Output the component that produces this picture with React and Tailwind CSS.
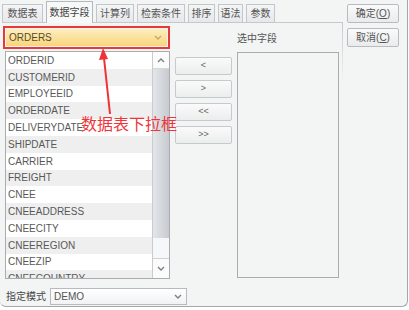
import React from "react";

const fields = [
  "ORDERID",
  "CUSTOMERID",
  "EMPLOYEEID",
  "ORDERDATE",
  "DELIVERYDATE",
  "SHIPDATE",
  "CARRIER",
  "FREIGHT",
  "CNEE",
  "CNEEADDRESS",
  "CNEECITY",
  "CNEEREGION",
  "CNEEZIP",
  "CNEECOUNTRY",
];

const tabs = [
  { label: "数据表", w: "w-[41px]" },
  { label: "数据字段", w: "w-[47px]", active: true },
  { label: "计算列", w: "w-[38px]" },
  { label: "检索条件", w: "w-[48px]" },
  { label: "排序", w: "w-[27px]" },
  { label: "语法", w: "w-[25px]" },
  { label: "参数", w: "w-[29px]" },
];

const Chevron = ({ up, color = "#7a7f86" }) => (
  <svg width="8" height="5" viewBox="0 0 8 5">
    <path
      d={up ? "M1 4 L4 1 L7 4" : "M1 1 L4 4 L7 1"}
      fill="none"
      stroke={color}
      strokeWidth="1.4"
    />
  </svg>
);

const SmallBtn = ({ children }) => (
  <div className="h-[18px] w-[57px] flex items-center justify-center rounded-[2px] border border-[#c6c9cd] bg-gradient-to-b from-[#fafafa] to-[#eceded] text-[9px] text-[#666]">
    {children}
  </div>
);

const App = () => {
  return (
    <div
      className="relative w-[409px] h-[310px] bg-white overflow-hidden"
      style={{ fontFamily: '"Liberation Sans", "Noto Sans CJK SC", sans-serif' }}
    >
      <div className="w-[408px] h-[307px] bg-[#f3f4f4] border-r border-b border-[#a3a7ab] rounded-br-[6px] rounded-bl-[6px] flex">
        {/* left: tabs + panel */}
        <div className="ml-[2px] w-[341px] flex flex-col">
          <div className="flex items-end gap-[3px] h-[22px]">
            {tabs.map((t) =>
              t.active ? (
                <div
                  key={t.label}
                  className={`${t.w} h-[22px] -mb-px relative z-10 flex items-center justify-center border border-b-0 border-[#b5b9be] bg-[#f7f8f8] text-[10px] text-[#444]`}
                >
                  {t.label}
                </div>
              ) : (
                <div
                  key={t.label}
                  className={`${t.w} h-[18px] flex items-center justify-center border border-b-0 border-[#c3c6ca] bg-gradient-to-b from-[#f4f5f6] to-[#e6e8ea] text-[10px] text-[#555]`}
                >
                  {t.label}
                </div>
              )
            )}
          </div>
          <div className="flex-1 border-t border-[#c6c9cc] flex flex-col pl-[1px] relative">
            <div className="absolute right-0 top-0 w-px h-[60px] bg-gradient-to-b from-[#c6c9cc] to-[#f3f4f4]" />
            <div className="flex">
              {/* combo + list */}
              <div className="flex flex-col w-[167px]">
                <div className="mt-[3px] h-[23px] w-[167px] border-2 border-[#e8383a] p-[1px]">
                  <div className="h-full w-full flex items-center justify-between pl-[3px] pr-[5px] bg-gradient-to-b from-[#fdefbd] to-[#f8d57c] text-[10px] text-[#5a4a2a]">
                    <span>ORDERS</span>
                    <Chevron color="#c9a866" />
                  </div>
                </div>
                <div className="mt-[2px] ml-[2px] w-[165px] h-[228px] border border-[#a9adb2] bg-white flex overflow-hidden">
                  <div className="flex-1 flex flex-col overflow-hidden">
                    {fields.map((f, i) => (
                      <div
                        key={f}
                        className={`h-[16.8px] shrink-0 flex items-center pl-[2px] text-[10px] text-[#585858] ${
                          i % 2 === 1 ? "bg-[#efefef]" : "bg-white"
                        }`}
                      >
                        {f}
                      </div>
                    ))}
                  </div>
                  <div className="w-[17px] border-l border-[#c8cbcf] flex flex-col bg-[#f0f1f2]">
                    <div className="h-[17px] flex items-center justify-center bg-[#fbfbfb] border-b border-[#d5d8db]">
                      <Chevron up />
                    </div>
                    <div className="h-[169px] bg-gradient-to-r from-[#e3e6e9] to-[#c7cbd1]" />
                    <div className="h-[21px] bg-[#f6f7f8] border-b border-[#d0d3d6]" />
                    <div className="flex-1 flex items-center justify-center bg-[#fbfbfb]">
                      <Chevron />
                    </div>
                  </div>
                </div>
              </div>
              {/* move buttons */}
              <div className="ml-[5px] pt-[34px] flex flex-col gap-[5px]">
                <SmallBtn>&lt;</SmallBtn>
                <SmallBtn>&gt;</SmallBtn>
                <SmallBtn>&lt;&lt;</SmallBtn>
                <SmallBtn>&gt;&gt;</SmallBtn>
              </div>
              {/* selected fields */}
              <div className="ml-[5px] flex flex-col">
                <div className="h-[29px] pt-[8px] text-[10px] text-[#555]">选中字段</div>
                <div className="w-[102px] h-[226px] border border-[#a9acaf] bg-[#f3f4f4]" />
              </div>
            </div>
            <div className="mt-[9px] flex items-center">
              <span className="ml-[3px] text-[10px] text-[#444]">指定模式</span>
              <div className="ml-[4px] w-[137px] h-[17px] border border-[#b7bbbf] bg-gradient-to-b from-[#ffffff] to-[#f1f2f3] flex items-center justify-between pl-[3px] pr-[4px] text-[10px] text-[#555]">
                <span>DEMO</span>
                <Chevron />
              </div>
            </div>
          </div>
        </div>
        {/* right: dialog buttons */}
        <div className="ml-[4px] pt-[4px] flex flex-col gap-[5px]">
          <div className="w-[52px] h-[19px] flex items-center justify-center border border-[#b8bcc0] rounded-[2px] bg-gradient-to-b from-[#fafafa] to-[#eaebec] text-[10px] text-[#555]">
            确定(<span className="underline">O</span>)
          </div>
          <div className="w-[52px] h-[19px] flex items-center justify-center border border-[#b8bcc0] rounded-[2px] bg-gradient-to-b from-[#fafafa] to-[#eaebec] text-[10px] text-[#555]">
            取消(<span className="underline">C</span>)
          </div>
        </div>
      </div>

      {/* annotation overlay */}
      <svg className="absolute left-0 top-0 pointer-events-none" width="409" height="310">
        <line x1="110" y1="114" x2="104" y2="58" stroke="#ee3338" strokeWidth="2" />
        <polygon points="103,48 99,60 108,59" fill="#ee3338" />
      </svg>
      <div
        className="absolute left-[81px] top-[113px] text-[16px] leading-[20px] text-[#ef3539]"
        style={{ fontFamily: '"Noto Sans CJK SC", sans-serif' }}
      >
        数据表下拉框
      </div>
    </div>
  );
};

export default App;
